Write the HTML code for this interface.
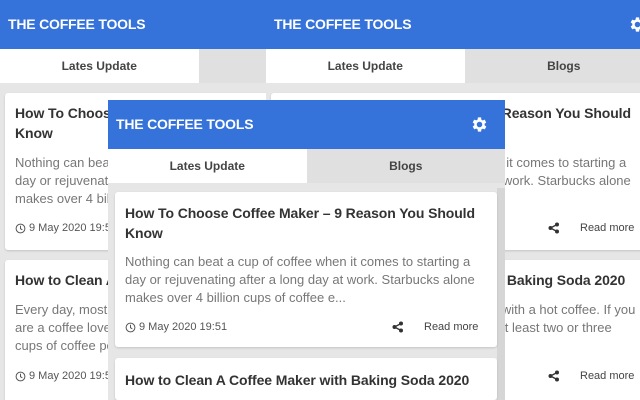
<!DOCTYPE html>
<html style="overflow:hidden"><head><meta charset="utf-8"><style>
*{margin:0;padding:0;box-sizing:border-box}
body{width:640px;height:400px;overflow:hidden;background:#e4e4e4;position:relative;font-family:"Liberation Sans","DejaVu Sans",sans-serif}
.p{position:absolute;width:397px;height:400px;background:#e6e6e6;overflow:hidden}
.hd{height:49px;background:#3573db;color:#fff;font-weight:bold;font-size:14px;padding:16px 0 0 8px;position:relative;letter-spacing:-0.2px}
.hd svg{position:absolute;right:16px;top:15px}
.tabs{height:34px;display:flex;font-size:12px;font-weight:bold;color:#444}
.tabs div{width:50%;text-align:center;line-height:34px}
.t1{background:#fff}.t2{background:#e0e0e0}
.card{position:absolute;left:7px;width:382px;background:#fff;border-radius:3px;box-shadow:0 1px 2px rgba(0,0,0,.15)}
.ti{position:absolute;left:10px;font-size:14px;font-weight:bold;color:#333;line-height:20px;white-space:nowrap;letter-spacing:-0.1px}
.tx{position:absolute;left:10px;font-size:13px;color:#777;line-height:18px;white-space:nowrap}
.dt{position:absolute;left:10px;font-size:11px;color:#555;white-space:nowrap;display:flex;align-items:center;gap:3px}
.sh{position:absolute;left:277px}
.rm{position:absolute;left:309px;font-size:11px;color:#444}
.sb{position:absolute;right:0;top:88px;width:8px;height:217px;background:#d6d6d6}
</style></head><body>

<svg width="0" height="0" style="position:absolute"><defs>
<symbol id="g" viewBox="0 0 24 24"><path fill="#fff" d="M19.4 13a7.5 7.5 0 0 0 0-2l2.1-1.6-2-3.5-2.5 1a7.7 7.7 0 0 0-1.7-1L15 3h-4l-.4 2.8a7.7 7.7 0 0 0-1.7 1l-2.5-1-2 3.5L6.5 11a7.5 7.5 0 0 0 0 2l-2.1 1.6 2 3.5 2.5-1a7.7 7.7 0 0 0 1.7 1L11 21h4l.4-2.8a7.7 7.7 0 0 0 1.7-1l2.5 1 2-3.5zM13 15.5a3.5 3.5 0 1 1 0-7 3.5 3.5 0 0 1 0 7z" transform="translate(-1 0)"/></symbol>
<symbol id="c" viewBox="0 0 12 12"><circle cx="6" cy="6" r="4.8" fill="none" stroke="#555" stroke-width="1.1"/><path d="M6 3v3.2l2 1.3" fill="none" stroke="#555" stroke-width="1.1"/></symbol>
<symbol id="s" viewBox="0 0 12 12"><circle cx="9" cy="2.5" r="2" fill="#333"/><circle cx="2.5" cy="6" r="2" fill="#333"/><circle cx="9" cy="9.5" r="2" fill="#333"/><path d="M9 2.5L2.5 6 9 9.5" stroke="#333" stroke-width="1.3" fill="none"/></symbol>
</defs></svg>

<div class="p" style="left:0;top:0">
 <div class="hd">THE COFFEE TOOLS<svg width="19" height="19"><use href="#g"/></svg></div>
 <div class="tabs"><div class="t1">Lates Update</div><div class="t2">Blogs</div></div>
 <div class="card" style="left:5px;top:93px;height:157px">
  <div class="ti" style="top:10px">How To Choose Coffee Maker – 9 Reason You Should<br>Know</div>
  <div class="tx" style="top:61px">Nothing can beat a cup of coffee when it comes to starting a<br>day or rejuvenating after a long day at work. Starbucks alone<br>makes over 4 billion cups of coffee e...</div>
  <div class="dt" style="top:129px"><svg width="11" height="11"><use href="#c"/></svg>9 May 2020 19:51</div>
 </div>
 <div class="card" style="left:5px;top:260px;height:157px">
  <div class="ti" style="top:10px">How to Clean A Coffee Maker with Baking Soda 2020</div>
  <div class="tx" style="top:41px">Every day, most people start their day with a hot coffee. If you<br>are a coffee lover, you probably drink at least two or three<br>cups of coffee per day...</div>
  <div class="dt" style="top:110px"><svg width="11" height="11"><use href="#c"/></svg>9 May 2020 19:51</div>
 </div>
</div>

<div class="p" style="left:266px;top:0">
 <div class="hd">THE COFFEE TOOLS<svg width="19" height="19"><use href="#g"/></svg></div>
 <div class="tabs"><div class="t1">Lates Update</div><div class="t2">Blogs</div></div>
 <div class="card" style="left:5px;top:93px;height:157px">
  <div class="ti" style="top:10px">How To Choose Coffee Maker – 9 Reason You Should<br>Know</div>
  <div class="tx" style="top:61px">Nothing can beat a cup of coffee when it comes to starting a<br>day or rejuvenating after a long day at work. Starbucks alone<br>makes over 4 billion cups of coffee e...</div>
  <div class="dt" style="top:129px"><svg width="11" height="11"><use href="#c"/></svg>9 May 2020 19:51</div>
  <svg class="sh" style="top:129px" width="12" height="12"><use href="#s"/></svg>
  <div class="rm" style="top:129px">Read more</div>
 </div>
 <div class="card" style="left:5px;top:260px;height:140px">
  <div class="ti" style="top:10px">How to Clean A Coffee Maker with Baking Soda 2020</div>
  <div class="tx" style="top:41px">Every day, most people start their day with a hot coffee. If you<br>are a coffee lover, you probably drink at least two or three<br>cups of coffee per day...</div>
  <svg class="sh" style="top:110px" width="12" height="12"><use href="#s"/></svg>
  <div class="rm" style="top:110px">Read more</div>
 </div>
</div>

<div class="p" style="left:108px;top:100px;height:300px">
 <div class="hd">THE COFFEE TOOLS<svg width="19" height="19"><use href="#g"/></svg></div>
 <div class="tabs"><div class="t1">Lates Update</div><div class="t2">Blogs</div></div>
 <div class="sb"></div>
 <div class="card" style="top:92px;height:155px">
  <div class="ti" style="top:11px">How To Choose Coffee Maker – 9 Reason You Should<br>Know</div>
  <div class="tx" style="top:61px">Nothing can beat a cup of coffee when it comes to starting a<br>day or rejuvenating after a long day at work. Starbucks alone<br>makes over 4 billion cups of coffee e...</div>
  <div class="dt" style="top:129px"><svg width="11" height="11"><use href="#c"/></svg>9 May 2020 19:51</div>
  <svg class="sh" style="top:129px" width="12" height="12"><use href="#s"/></svg>
  <div class="rm" style="top:129px">Read more</div>
 </div>
 <div class="card" style="top:258px;height:42px">
  <div class="ti" style="top:12px">How to Clean A Coffee Maker with Baking Soda 2020</div>
 </div>
</div>
</body></html>
